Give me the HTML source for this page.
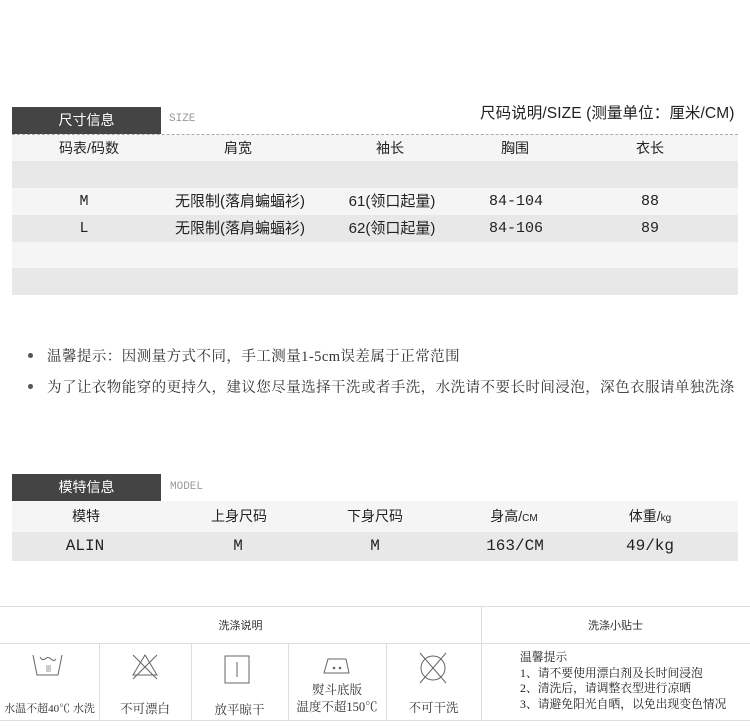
<!DOCTYPE html>
<html><head><meta charset="utf-8"><style>
*{margin:0;padding:0;box-sizing:border-box}
body{width:750px;height:726px;background:#fff;position:relative;overflow:hidden;font-family:"Liberation Serif","Noto Serif CJK SC",serif;color:#222}
.a{position:absolute}
.bar{background:#444;color:#fff;font-family:"Liberation Sans","Noto Sans CJK SC",sans-serif;font-size:14px;text-align:center}
.row{position:absolute;left:12px;width:726px}
.c{position:absolute;top:0;transform:translateX(-50%);white-space:nowrap}
.s{font-family:"Liberation Sans","Noto Sans CJK SC",sans-serif}
.m{font-family:"Liberation Mono",monospace}
.dot{position:absolute;width:5px;height:5px;border-radius:50%;background:#555}
</style></head><body>
<div class="a bar" style="left:12px;top:107px;width:149px;height:27px;line-height:27px">尺寸信息</div>
<div class="a" style="left:169px;top:113px;font-size:11px;color:#999;font-family:'Liberation Mono',monospace">SIZE</div>
<div class="a s" style="left:480px;top:101px;font-size:15.5px;color:#222;white-space:nowrap;letter-spacing:0.1px">尺码说明/SIZE (测量单位：厘米/CM)</div>
<div class="a" style="left:12px;top:134px;width:726px;border-top:1px dashed #aaa"></div>
<div class="row s" style="top:135px;height:26px;background:#f5f5f5;font-size:14px;line-height:26px">
<span class="c" style="left:77px">码表/码数</span><span class="c" style="left:226px">肩宽</span><span class="c" style="left:378px">袖长</span><span class="c" style="left:503px">胸围</span><span class="c" style="left:638px">衣长</span></div>
<div class="row" style="top:161px;height:27px;background:#e8e8e8"></div>
<div class="row" style="top:188px;height:27px;background:#f5f5f5;font-size:15px;line-height:27px">
<span class="c m" style="left:72px">M</span><span class="c s" style="left:228px">无限制(落肩蝙蝠衫)</span><span class="c s" style="left:380px">61(领口起量)</span><span class="c m" style="left:504px">84-104</span><span class="c m" style="left:638px">88</span></div>
<div class="row" style="top:215px;height:27px;background:#e8e8e8;font-size:15px;line-height:27px">
<span class="c m" style="left:72px">L</span><span class="c s" style="left:228px">无限制(落肩蝙蝠衫)</span><span class="c s" style="left:380px">62(领口起量)</span><span class="c m" style="left:504px">84-106</span><span class="c m" style="left:638px">89</span></div>
<div class="row" style="top:242px;height:26px;background:#f5f5f5"></div>
<div class="row" style="top:268px;height:27px;background:#e8e8e8"></div>

<div class="dot" style="left:28px;top:353px"></div>
<div class="dot" style="left:28px;top:384px"></div>
<div class="a" style="left:47px;top:345px;font-size:14.5px;color:#333;white-space:nowrap;letter-spacing:0.45px">温馨提示：因测量方式不同，手工测量1-5cm误差属于正常范围</div>
<div class="a" style="left:47px;top:376px;font-size:14.5px;color:#333;white-space:nowrap;letter-spacing:0.45px">为了让衣物能穿的更持久，建议您尽量选择干洗或者手洗，水洗请不要长时间浸泡，深色衣服请单独洗涤</div>

<div class="a bar" style="left:12px;top:474px;width:149px;height:27px;line-height:27px">模特信息</div>
<div class="a" style="left:170px;top:481px;font-size:11px;color:#999;font-family:'Liberation Mono',monospace">MODEL</div>
<div class="row s" style="top:501px;height:31px;background:#f5f5f5;font-size:14px;line-height:31px">
<span class="c" style="left:74px">模特</span><span class="c" style="left:227px">上身尺码</span><span class="c" style="left:363px">下身尺码</span><span class="c" style="left:502px">身高/<small style="font-size:10px">CM</small></span><span class="c" style="left:638px">体重/<small style="font-size:10px">kg</small></span></div>
<div class="row m" style="top:532px;height:29px;background:#e8e8e8;font-size:16px;line-height:29px">
<span class="c" style="left:73px">ALIN</span><span class="c" style="left:226px">M</span><span class="c" style="left:363px">M</span><span class="c" style="left:503px">163/CM</span><span class="c" style="left:638px">49/kg</span></div>

<div class="a" style="left:0;top:606px;width:750px;border-top:1px solid #ddd"></div>
<div class="a" style="left:0;top:643px;width:750px;border-top:1px solid #ddd"></div>
<div class="a" style="left:0;top:720px;width:750px;border-top:1px solid #ddd"></div>
<div class="a" style="left:481px;top:606px;height:114px;border-left:1px solid #ddd"></div>
<div class="a" style="left:99px;top:643px;height:77px;border-left:1px solid #ddd"></div>
<div class="a" style="left:191px;top:643px;height:77px;border-left:1px solid #ddd"></div>
<div class="a" style="left:288px;top:643px;height:77px;border-left:1px solid #ddd"></div>
<div class="a" style="left:386px;top:643px;height:77px;border-left:1px solid #ddd"></div>
<div class="a s" style="left:0;width:481px;top:617px;text-align:center;font-size:11px;color:#333">洗涤说明</div>
<div class="a s" style="left:481px;width:269px;top:617px;text-align:center;font-size:11px;color:#333">洗涤小贴士</div>
<svg class="a" style="left:0;top:643px" width="481" height="77" fill="none" stroke="#666" stroke-width="1">
<path d="M33 12 L37 32 L58 32 L62 12"/><path d="M40 14 q2 4 5 2 q3-3 6 0 q3 3 5 0"/><rect x="46" y="22" width="5" height="7" fill="#ccc" stroke="none"/>
<path d="M133 32 L145 12 L157 32 Z"/><path d="M133 12 L157 36 M157 12 L133 36"/>
<rect x="225" y="13" width="24" height="27"/><path d="M237 19 V34"/>
<path d="M324 30 L328 16 L346 16 L349 30 Z"/><circle cx="334" cy="25" r=".8" fill="#666"/><circle cx="340" cy="25" r=".8" fill="#666"/>
<circle cx="433" cy="25" r="12"/><path d="M420 10 L446 40 M446 10 L420 40"/>
</svg>
<div class="a" style="left:0;width:99px;top:700px;text-align:center;font-size:11px;color:#333;white-space:nowrap">水温不超40℃ 水洗</div>
<div class="a" style="left:99px;width:92px;top:699px;text-align:center;font-size:12.5px;color:#333">不可漂白</div>
<div class="a" style="left:191px;width:97px;top:700px;text-align:center;font-size:12.5px;color:#333">放平晾干</div>
<div class="a" style="left:288px;width:98px;top:682px;text-align:center;font-size:12.5px;color:#333;line-height:17px">熨斗底版<br>温度不超150℃</div>
<div class="a" style="left:386px;width:95px;top:698px;text-align:center;font-size:12.5px;color:#333">不可干洗</div>
<div class="a" style="left:520px;top:650px;font-size:11.8px;color:#222;line-height:15.5px;white-space:nowrap">温馨提示<br>1、请不要使用漂白剂及长时间浸泡<br>2、清洗后，请调整衣型进行凉晒<br>3、请避免阳光自晒，以免出现变色情况</div>
</body></html>
